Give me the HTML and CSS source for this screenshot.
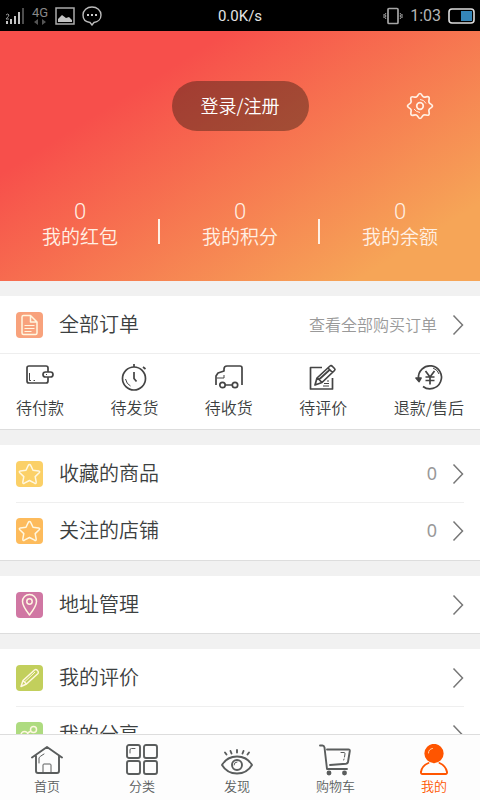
FILE: index.html
```html
<!DOCTYPE html>
<html lang="zh-CN">
<head>
<meta charset="utf-8">
<meta name="viewport" content="width=device-width, initial-scale=1">
<title>我的</title>
<link rel="stylesheet" href="styles.css">
</head>
<body>
<svg class="defs" aria-hidden="true">
  <symbol id="chevron" viewBox="0 0 12 22"><path d="M1.500 1.500 10.500 11 1.500 20.500"/></symbol>
  <symbol id="star" viewBox="0 0 27 26"><path d="M13.500 3.500q.8 0 1.200.9l2.300 4.800 5.600.7q1.800.4.600 1.800l-4 3.900 1 5.500q.1 1.900-1.600 1.100l-5.100-2.700-5.100 2.700q-1.700.8-1.600-1.100l1-5.500-4-3.900q-1.200-1.400.6-1.800l5.600-.7 2.300-4.800q.4-.9 1.200-.9Z"/></symbol>
</svg>
<header class="status">
  <div class="status-left">
    <svg width="20" height="18" viewBox="0 0 20 18"><g fill="#c4c4c4"><path d="M1 14h2v3H1zM5 12h2v5H5zM9 9h2v8H9zM13 5h2v12h-2z"/><path fill="#4c4c4c" d="M17 1h2v16h-2z"/></g><path d="M1 8q2-2 3 0 0 1-3 4h3" fill="none" stroke="#999"/></svg>
    <span class="network">4G<svg width="14" height="6" viewBox="0 0 14 6"><path d="M5 0v6L1 3zM9 0v6l4-3z" fill="#555"/></svg></span>
    <svg width="20" height="18" viewBox="0 0 20 18"><path d="M1 1h18v16H1z" fill="none" stroke="#aaa" stroke-width="1.500"/><path d="M3 15v-3l4-4 4 3 3-1 3 3v2z" fill="#c4c4c4"/></svg>
    <svg width="20" height="20" viewBox="0 0 20 20"><path d="M8 16.500C3.500 16 1 13 1 9c0-4.500 4-8 9-8s9 3.500 9 8c0 4-3 7-7 7.500L10 19z" fill="none" stroke="#bbb" stroke-width="1.400"/><path d="M5 8h2v2H5zM9 8h2v2H9zM13 8h2v2h-2z" fill="#ccc"/></svg>
  </div>
  <span class="speed">0.0K/s</span>
  <div class="status-right">
    <svg width="20" height="18" viewBox="0 0 20 18" fill="none" stroke="#a5a5a5"><rect x="5" y="1.500" width="10" height="15" rx="1" stroke-width="1.700"/><path d="m3 6-1 1.500L3 9l-1 1.500L3 12M17 6l1 1.500L17 9l1 1.500-1 1.500M1 7v4M19 7v4"/></svg>
    <span>1:03</span>
    <svg width="27" height="16" viewBox="0 0 27 16"><rect x="1" y="1" width="25" height="14" rx="3" fill="none" stroke="#ddd" stroke-width="1.600"/><path d="M13 3h11v10H13z" fill="#3585b7"/></svg>
  </div>
</header>
<main class="content">
  <section class="hero">
    <div class="account">
      <button class="login" type="button">登录/注册</button>
      <button class="settings" type="button" aria-label="设置">
        <svg width="28" height="28" viewBox="0 0 28 28" fill="none" stroke="#fff0e4" stroke-width="1.700"><path stroke-linejoin="round" d="M14 1.500c1.800 0 1.800 2.800 3.700 3.500 1.800.7 3.800-1.200 5.100.2s-.6 3.200.2 5.100 3.500 1.900 3.500 3.700-2.800 1.800-3.500 3.700 1.200 3.800-.2 5.100-3.300-.6-5.100.2-1.900 3.500-3.700 3.500-1.800-2.800-3.700-3.500-3.800 1.200-5.100-.2.600-3.200-.2-5.100-3.500-1.900-3.500-3.700 2.800-1.800 3.500-3.700-1.200-3.800.2-5.100 3.300.6 5.100-.2S12.200 1.500 14 1.500Z"/><circle cx="14" cy="14" r="3.300"/><path stroke-width="1" d="M14 7.500q4 0 6 4M8 17q2 3 6 3.500"/></svg>
      </button>
    </div>
    <div class="stats">
      <a href="#"><span class="amount">0</span><span>我的红包</span></a>
      <a href="#"><span class="amount">0</span><span>我的积分</span></a>
      <a href="#"><span class="amount">0</span><span>我的余额</span></a>
    </div>
  </section>

  <section class="card">
    <a class="row" href="#">
      <svg class="tile coral" viewBox="0 0 27 26"><path d="M6 5q0-1.500 1.500-1.500h7L21 10v11q0 1.500-1.500 1.500h-12Q6 22.500 6 21zM14.500 3.500V10H21"/><path class="thin" d="M8.500 13.500h10M8.500 16.500h10M8.500 19.500h7"/></svg>
      <span class="title">全部订单</span><span class="note">查看全部购买订单</span><svg class="arrow"><use href="#chevron"/></svg>
    </a>
    <div class="orders">
      <a href="#"><svg viewBox="0 0 30 28"><rect x="2" y="3" width="21" height="17" rx="2"/><rect class="paper" x="18" y="9" width="10" height="5" rx="2.500"/><path class="thin" d="M4.500 10v7.500H6M8.500 17.500h1.500M21 11.500h1"/></svg><span>待付款</span></a>
      <a href="#"><svg viewBox="0 0 30 28"><circle cx="15" cy="15.500" r="11.500"/><path d="M15 1v3M24 4l2.500 2M15 9v6.500l2.500 3"/><path class="thin" d="M6.500 16q1 5 5 7"/></svg><span>待发货</span></a>
      <a href="#"><svg viewBox="0 0 30 28"><path d="M2 22v-9l2-3 6-2V6q0-3 3-3h13q2 0 2 2v17M11 22h8"/><path class="thin" d="M3 15h7v-3"/><circle cx="8.500" cy="22" r="2.700"/><circle cx="21" cy="22" r="2.700"/></svg><span>待收货</span></a>
      <a href="#"><svg viewBox="0 0 30 28"><path d="M14 4.500H2.500V26h22V15"/><path d="m7 22 2-7L22 3q1-1 2.500.5l2 2q1 1 0 2L14 19.500zM20 5l4.500 4.500M9 14.500l5 5M11 16.500 22 6.500"/><path class="thin" d="M16 20.500h5M15 23h6M19 18h2"/></svg><span>待评价</span></a>
      <a href="#"><svg viewBox="0 0 30 28"><path d="M4.500 15.500A11.500 11.500 0 1 1 9 23.500"/><path class="mark" d="M2 15l3 3.500L7 15z"/><path d="m11.500 8 4.500 6 4.500-6M16 14v7.500M11.500 14h9M11.500 17.500h9"/><path class="thin" d="M19 5q5 2 6 6"/></svg><span>退款/售后</span></a>
    </div>
  </section>

  <section class="card">
    <a class="row" href="#"><svg class="tile yellow"><use href="#star"/></svg><span class="title">收藏的商品</span><span class="note count">0</span><svg class="arrow"><use href="#chevron"/></svg></a>
    <a class="row" href="#"><svg class="tile amber"><use href="#star"/></svg><span class="title">关注的店铺</span><span class="note count">0</span><svg class="arrow"><use href="#chevron"/></svg></a>
  </section>

  <section class="card">
    <a class="row" href="#"><svg class="tile pink" viewBox="0 0 27 26"><path d="M13.500 23Q6.500 14 6.500 9.500a7 7 0 0 1 14 0Q20.500 14 13.500 23Z"/><circle cx="13.500" cy="9.500" r="2.700"/></svg><span class="title">地址管理</span><svg class="arrow"><use href="#chevron"/></svg></a>
  </section>

  <section class="card">
    <a class="row" href="#"><svg class="tile lime" viewBox="0 0 27 26"><path d="m5 21.500 2-6L18.500 5q1.500-1 3 .5t.5 3L10.500 19zM7 15.500l3.500 3.500"/><path class="thin" d="M9 16.500 19 7"/></svg><span class="title">我的评价</span><svg class="arrow"><use href="#chevron"/></svg></a>
    <a class="row" href="#"><svg class="tile green" viewBox="0 0 27 26"><circle cx="17.500" cy="7.500" r="3"/><circle cx="8.500" cy="13" r="3.500"/><circle cx="18" cy="19" r="3"/><path d="m11.500 11 3.500-2M11.500 15l3.500 2.500"/></svg><span class="title">我的分享</span><svg class="arrow"><use href="#chevron"/></svg></a>
  </section>
</main>
<nav class="tabs">
  <a href="#"><svg viewBox="0 0 32 32"><path d="M1 13.500 16 3l15 10.500M5 12v15q0 2 2 2h19q2 0 2-2V12"/><path class="thin" d="M12 29v-8q0-1 1-1h6q1 0 1 1v8M8 19v-5q0-1 5-4"/></svg><span>首页</span></a>
  <a href="#"><svg viewBox="0 0 32 32"><rect x="1" y="1" width="13" height="13" rx="2"/><rect x="18" y="1" width="13" height="13" rx="2"/><rect x="1" y="17" width="13" height="13" rx="2"/><rect x="18" y="17" width="13" height="13" rx="2"/><path class="thin" d="M4 9V6q0-1.500 1.500-1.500H9"/></svg><span>分类</span></a>
  <a href="#"><svg viewBox="0 0 32 32"><path d="M1 21Q6 12.500 16 12.500T31 21Q26 29.500 16 29.500T1 21Z"/><circle cx="16" cy="21" r="5"/><path class="thin" d="M13 21q0-3 3-3"/><path d="m4 8.500 1.500 2M9.500 7l1 2.500M16 6v2.500M22.500 7l-1 2.500M28 8.500l-1.500 2"/></svg><span>发现</span></a>
  <a href="#"><svg viewBox="0 0 32 32"><path d="M1 1.500h2.500q1.500 0 2 2L8 25h20M8 5.500h21.500q1.500 0 1.300 1.500L29 18q-.2 1.500-2 1.700L11 21"/><path class="thin" d="M22 8.500h3q1 0 1 1.200L25.500 13M25 15l-.3 1"/><circle class="solid" cx="10" cy="29" r="1.500"/><circle class="solid" cx="25.500" cy="29" r="1.500"/></svg><span>购物车</span></a>
  <a class="active" href="#" aria-current="page"><svg viewBox="0 0 32 32"><circle class="solid" cx="16" cy="9.500" r="8.700"/><path d="M10.500 19q-7 3-7.500 9-.3 2 1.500 2h23q1.800 0 1.500-2-1-6-7.500-9"/><path class="shine" d="M10.500 9q0-4 4-4.500"/></svg><span>我的</span></a>
</nav>
</body>
</html>
```
FILE: styles.css
```css
* { box-sizing: border-box; }

body {
  margin: 0;
  height: 100vh;
  display: flex;
  flex-direction: column;
  overflow: hidden;
  background: #f1f1f1;
  color: #3c4040;
  font-family: "Noto Sans CJK SC", sans-serif;
  font-weight: 350;
}

a { color: inherit; text-decoration: none; }
svg { display: block; flex: none; }
.defs { position: absolute; width: 0; height: 0; }

.status {
  flex: none;
  display: grid;
  grid-template-columns: 1fr auto 1fr;
  align-items: center;
  height: 31px;
  padding: 0 5px;
  background: #000;
  color: #b4b4b4;
  font: 16px/20px Roboto, sans-serif;
}
.status-left, .status-right { display: flex; align-items: center; gap: 7px; }
.status-right { justify-content: flex-end; }
.speed { color: #e4e4e4; font-size: 15px; }
.network { font-size: 13px; line-height: 13px; color: #888; }
.network svg { margin: 0 auto; }

.content { flex: 1; min-height: 0; overflow: hidden; }

.hero {
  height: 250px;
  padding-top: 50px;
  background: linear-gradient(148deg, #f74f4b 26%, #f6a557 86%);
  color: #fff0e4;
}
.account {
  display: grid;
  grid-template-columns: 1fr auto 1fr;
  align-items: center;
}
.login {
  grid-column: 2;
  width: 137px;
  height: 50px;
  padding: 0 0 2px;
  border: 0;
  border-radius: 25px;
  background: rgba(60, 30, 20, .45);
  color: #fff;
  font: inherit;
  font-size: 18px;
}
.settings {
  justify-self: end;
  margin-right: 46px;
  padding: 0;
  border: 0;
  background: none;
}
.stats { display: flex; margin-top: 68px; }
.stats a {
  flex: 1;
  display: flex;
  flex-direction: column;
  align-items: center;
  position: relative;
  font-size: 19px;
  line-height: 24px;
}
.stats .amount { font: 300 22px/25px Roboto, sans-serif; }
.stats a + a::before {
  content: "";
  position: absolute;
  left: -2px;
  top: 20px;
  width: 2px;
  height: 25px;
  background: #fff0e4;
}

.card {
  margin-top: 15px;
  background: #fff;
  border-bottom: 1px solid #ddd;
}
.row {
  display: flex;
  align-items: center;
  height: 57px;
  padding: 0 16px;
}
.row + .row { height: 58px; position: relative; }
.row + .row::before {
  content: "";
  position: absolute;
  inset: 0 16px auto;
  height: 1px;
  background: #efefef;
}
.title, .note { padding-bottom: 2px; }
.title { margin-left: 16px; font-size: 20px; line-height: 28px; }
.note { margin-left: auto; color: #999; font-size: 16px; }
.count { font: 18px/24px "Noto Sans", sans-serif; }
.title + .arrow { margin-left: auto; }
.note + .arrow { margin-left: 15px; }
.arrow { width: 12px; height: 22px; fill: none; stroke: #777; stroke-width: 1.500; }

.tile {
  width: 27px;
  height: 26px;
  border-radius: 4px;
  fill: none;
  stroke: #fff7e0;
  stroke-width: 1.500;
  stroke-linejoin: round;
}
.thin { stroke-width: 1; }
.coral { background: #f8a27c; }
.yellow { background: #fbd067; }
.amber { background: #fdbb5c; }
.pink { background: #d077a3; }
.lime { background: #c2cf5c; }
.green { background: #aedb80; }

.orders {
  display: flex;
  justify-content: space-between;
  padding: 9px 16px 10px;
  border-top: 1px solid #eee;
}
.orders a {
  display: flex;
  flex-direction: column;
  align-items: center;
  gap: 4px;
  font-size: 16px;
  line-height: 24px;
}
.orders svg {
  width: 30px;
  height: 28px;
  fill: none;
  stroke: #444;
  stroke-width: 1.700;
  stroke-linejoin: round;
}
.orders .thin { stroke-width: 1; }
.orders .paper { fill: #fff; }
.orders .mark { fill: #444; }

.tabs {
  flex: none;
  display: flex;
  justify-content: space-between;
  height: 66px;
  padding: 9px 30px 0 31px;
  border-top: 1px solid #ddd;
  background: #fdfdfd;
  color: #5a5d5d;
}
.tabs a {
  display: flex;
  flex-direction: column;
  align-items: center;
  font-size: 13px;
  line-height: 20px;
}
.tabs svg {
  width: 32px;
  height: 32px;
  fill: none;
  stroke: currentColor;
  stroke-width: 1.900;
  stroke-linecap: round;
  stroke-linejoin: round;
}
.tabs .thin { stroke-width: 1; }
.tabs .solid { fill: currentColor; }
.tabs .active { color: #ff5500; }
.tabs .shine { stroke: #ffd0a8; stroke-width: 1; }
```
